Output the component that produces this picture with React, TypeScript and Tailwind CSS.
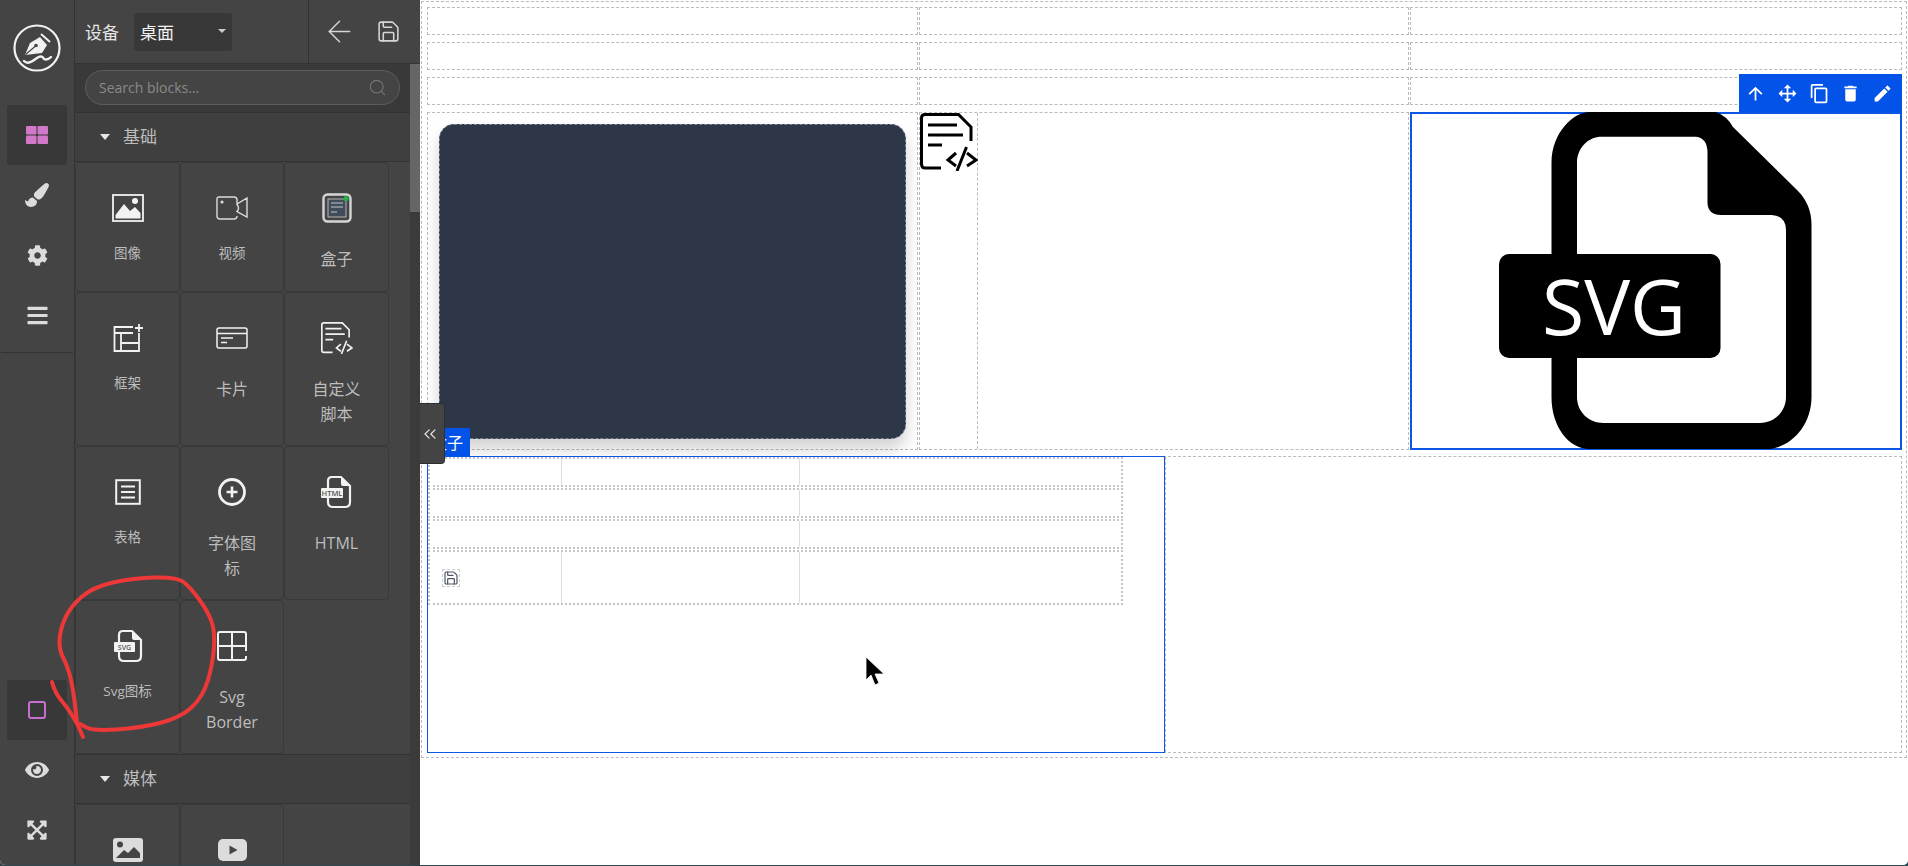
import React from "react";
import { ArrowLeft, ChevronsLeft, Save, Search } from "lucide-react";
import { FaBars, FaCog, FaExpandArrowsAlt, FaEye, FaPaintBrush } from "react-icons/fa";

// hand drawn ink on top of the screenshot
const smooth = (pts: number[][]): string => {
  let d = `M${pts[0][0]} ${pts[0][1]}`;
  for (let i = 1; i < pts.length - 1; i++) {
    const mx = (pts[i][0] + pts[i + 1][0]) / 2;
    const my = (pts[i][1] + pts[i + 1][1]) / 2;
    d += ` Q${pts[i][0]} ${pts[i][1]} ${mx} ${my}`;
  }
  const last = pts[pts.length - 1];
  return `${d} L${last[0]} ${last[1]}`;
};

const hook = [[52, 682], [55, 693], [67, 707], [77, 723], [83, 737]];
const loop = [
  [77, 723], [74, 693], [68, 667], [59, 650], [60, 630], [70, 607], [93, 587], [133, 578], [177, 577],
  [190, 587], [207, 610], [215, 630], [213, 663], [203, 697], [180, 718], [140, 728], [93, 731], [80, 724],
];

const toolbarIcons = [
  "M13,20H11V8L5.5,13.5L4.08,12.08L12,4.16L19.92,12.08L18.5,13.5L13,8V20Z",
  "M13,6V11H18V7.75L22.25,12L18,16.25V13H13V18H16.25L12,22.25L7.75,18H11V13H6V16.25L1.75,12L6,7.75V11H11V6H7.75L12,1.75L16.25,6H13Z",
  "M19,21H8V7H19M19,5H8A2,2 0 0,0 6,7V21A2,2 0 0,0 8,23H19A2,2 0 0,0 21,21V7A2,2 0 0,0 19,5M16,1H4A2,2 0 0,0 2,3V17H4V3H16V1Z",
  "M19,4H15.5L14.5,3H9.5L8.5,4H5V6H19M6,19A2,2 0 0,0 8,21H16A2,2 0 0,0 18,19V7H6V19Z",
  "M20.71,7.04C21.1,6.65 21.1,6 20.71,5.63L18.37,3.29C18,2.9 17.35,2.9 16.96,3.29L15.12,5.12L18.87,8.87M3,17.25V21H6.75L17.81,9.93L14.06,6.18L3,17.25Z",
];

const Logo = () => (
  <svg width="48" height="48" viewBox="0 0 48 48" fill="none" stroke="#f2f2f2">
    <circle cx="24" cy="24" r="22.5" strokeWidth="2.2" />
    <path d="M12 31 L17 19 L27 13 L34 21 L29 29 Z" fill="#f2f2f2" stroke="none" />
    <path d="M12.5 30.5 L22 22.5" stroke="#444" strokeWidth="1.2" />
    <circle cx="23" cy="21.5" r="1.8" fill="#444" stroke="none" />
    <path d="M28 10 L37 18" strokeWidth="2" />
    <path d="M11 37 C15 41 20 37 24 34 C28 31 30 33 31 35 C33 36 36 35 38 33" strokeWidth="2.4" strokeLinecap="round" />
  </svg>
);

const FileBadge = ({ label, small }: { label: string; small?: boolean }) => (
  <svg width="36" height="36" viewBox="0 0 36 36" fill="none">
    <path d="M9 7 Q9 3 13 3 H22 L31 12 V28 Q31 33 26 33 H14 Q9 33 9 28 Z" stroke="#f2f2f2" strokeWidth="2.2" />
    <path d="M22 3 V10 Q22 12 24 12 H31 Z" fill="#f2f2f2" />
    <rect x={small ? 4 : 2} y="14" width={small ? 21 : 22} height="10" rx="1" fill="#f2f2f2" />
    <text x={small ? 14.5 : 13} y="22" textAnchor="middle" fontSize={small ? 7 : 7.5} fontWeight="600" fill="#555">
      {label}
    </text>
  </svg>
);

const CodeFile = ({ size }: { size: number }) => (
  <svg width={size} height={size} viewBox="0 0 58 58" fill="none" stroke="currentColor" strokeWidth="3">
    <path d="M21 55 H5 Q1.5 55 1.5 51 V5 Q1.5 1.5 5 1.5 H38.5 L51 14 V28" />
    <path d="M8 12 H37 M8 22 H43 M8 32 H22" />
    <path d="M36 40 L28 47 L36 53 M47 40 L56 47 L47 53 M46.5 34 L37 58" />
  </svg>
);

const icons: Record<string, React.ReactNode> = {
  image: (
    <svg width="32" height="28" viewBox="0 0 32 28" fill="none">
      <rect x="1" y="1" width="30" height="26" stroke="#f2f2f2" strokeWidth="1.8" />
      <circle cx="23" cy="7" r="3" fill="#f2f2f2" />
      <path d="M3.5 24.5 V21 L12 10 L18 17 L23 13 L28.5 19 V24.5 Z" fill="#f2f2f2" />
    </svg>
  ),
  video: (
    <svg width="32" height="24" viewBox="0 0 32 24" fill="none" stroke="#dcdcdc" strokeWidth="1.4">
      <path d="M21 20 Q21 23 18 23 H4 Q1 23 1 20 V3 Q1 1 3 1 H18 Q21 1 21 4 V8 L31 2 V21 L21 15.5 Q24 12 21 8.5" />
      <circle cx="6" cy="6" r="0.9" fill="#dcdcdc" />
    </svg>
  ),
  box: (
    <svg width="30" height="30" viewBox="0 0 30 30" fill="none">
      <rect x="1.5" y="1.5" width="27" height="27" rx="4" stroke="#d6d6d6" strokeWidth="2.4" />
      <rect x="6" y="6" width="18" height="18" fill="#414b5a" stroke="#d0d0d0" strokeWidth="0.8" />
      <path d="M9 10 H21 M9 14 H21 M9 19 H15" stroke="#c5c8cc" strokeWidth="1" />
      <circle cx="24" cy="5.5" r="2.6" fill="#1fb44a" />
    </svg>
  ),
  frame: (
    <svg width="30" height="30" viewBox="0 0 30 30" fill="none" stroke="#f2f2f2" strokeWidth="1.8">
      <path d="M20 4 H1.5 V28 H26 V10" />
      <path d="M1.5 10 H20 M8 20 H26 M8 10 V28 M26 1 V9 M22 5 H30" />
    </svg>
  ),
  card: (
    <svg width="32" height="24" viewBox="0 0 32 24" fill="none" stroke="#f2f2f2" strokeWidth="1.5">
      <rect x="1" y="2" width="30" height="20" rx="2" />
      <path d="M1 7.5 H31" />
      <path d="M5 12 H17 M5 16.5 H11" />
    </svg>
  ),
  code: <CodeFile size={32} />,
  table: (
    <svg width="26" height="26" viewBox="0 0 26 26" fill="none" stroke="#f2f2f2">
      <rect x="1.2" y="1.2" width="23.6" height="23.6" strokeWidth="2" />
      <path d="M6 7.5 H20 M6 13 H20 M6 18.5 H20" strokeWidth="2" />
    </svg>
  ),
  fonticon: (
    <svg width="30" height="30" viewBox="0 0 30 30" fill="none" stroke="#f2f2f2">
      <circle cx="15" cy="15" r="12.5" strokeWidth="2.8" />
      <path d="M15 9.5 V20.5 M9.5 15 H20.5" strokeWidth="2.6" />
    </svg>
  ),
  html: <FileBadge label="HTML" />,
  svg: <FileBadge label="SVG" small />,
  border: (
    <svg width="32" height="32" viewBox="0 0 32 32" fill="none" stroke="#f2f2f2" strokeWidth="2">
      <path d="M30 21 V4 Q30 2 28 2 H4 Q2 2 2 4 V28 Q2 30 4 30 H28 Q30 30 30 28 V26" />
      <path d="M16 2 V30 M2 16 H30" />
    </svg>
  ),
  mediaImage: (
    <svg width="30" height="24" viewBox="0 0 30 24">
      <rect width="30" height="24" rx="3" fill="#dcdcdc" />
      <circle cx="7" cy="6.5" r="3" fill="#444" />
      <path d="M3 20 L11 12 L15 15 L21 9 L27 15 V20 Z" fill="#444" />
    </svg>
  ),
  mediaVideo: (
    <svg width="29" height="22" viewBox="0 0 29 22">
      <rect width="29" height="22" rx="5" fill="#dcdcdc" />
      <path d="M11.5 6.5 L19.5 11 L11.5 15.5 Z" fill="#444" />
    </svg>
  ),
};

const tiles = [
  { icon: "image", lines: ["图像"], small: true, h: "h-[130px]" },
  { icon: "video", lines: ["视频"], small: true, h: "h-[130px]" },
  { icon: "box", lines: ["盒子"], h: "h-[130px]" },
  { icon: "frame", lines: ["框架"], small: true, h: "h-[154px]" },
  { icon: "card", lines: ["卡片"], h: "h-[154px]" },
  { icon: "code", lines: ["自定义", "脚本"], h: "h-[154px]" },
  { icon: "table", lines: ["表格"], small: true, h: "h-[154px]" },
  { icon: "fonticon", lines: ["字体图", "标"], h: "h-[154px]" },
  { icon: "html", lines: ["HTML"], h: "h-[154px]" },
  { icon: "svg", lines: ["Svg图标"], small: true, h: "h-[154px]" },
  { icon: "border", lines: ["Svg", "Border"], h: "h-[154px]" },
];

const Tile = ({ icon, lines, small, h }: { icon: string; lines: string[]; small?: boolean; h: string }) => (
  <div className={`${h} flex flex-col items-center rounded-[4px] border border-[#393939] pt-[27px] text-[#bdbdbd]`}>
    <div className="flex h-9 items-center justify-center text-[#f2f2f2]">{icons[icon]}</div>
    {small ? (
      <div className="mt-[17px] text-[13.5px] leading-5">{lines[0]}</div>
    ) : (
      <div className="mt-[21px] text-center text-[16px] leading-[25px]">
        {lines.map((l) => (
          <div key={l}>{l}</div>
        ))}
      </div>
    )}
  </div>
);

const SectionHeader = ({ title }: { title: string }) => (
  <div className="flex h-[50px] items-center gap-[13px] border-y border-[#333] bg-[#3f3f3f] pl-[25px] text-[17px] text-[#bdbdbd]">
    <span className="h-0 w-0 border-x-[5.5px] border-t-[6px] border-x-transparent border-t-[#e6e6e6]" />
    {title}
  </div>
);

const RailButton = ({ active, children }: { active?: boolean; children: React.ReactNode }) => (
  <div className={`flex h-[60px] w-[60px] items-center justify-center rounded-[3px] text-[#dcdcdc] ${active ? "bg-[#383838]" : ""}`}>
    {children}
  </div>
);

const Cell = ({ className }: { className: string }) => <div className={`h-full border border-dashed border-[#bbb] ${className}`} />;

const TopRow = () => (
  <div className="flex h-7 gap-[1px]">
    <Cell className="w-[491px]" />
    <Cell className="w-[490px]" />
    <Cell className="flex-1" />
  </div>
);

const TableRow = ({ tall, merged, children }: { tall?: boolean; merged?: boolean; children?: React.ReactNode }) => (
  <div className={`flex border-2 border-dotted border-[#c4c4c4] ${tall ? "h-[55px]" : "h-[30px]"}`}>
    {!merged && <div className="flex w-[132px] items-center border-r border-[#ddd] pl-3">{children}</div>}
    <div className={`${merged ? "w-[370px]" : "w-[238px]"} border-r border-[#ddd]`} />
    <div className="flex-1" />
  </div>
);

export default function App() {
  return (
    <div className="relative h-[866px] w-[1908px] overflow-hidden bg-[#2c4a52] [font-family:'Open_Sans','Noto_Sans_CJK_SC',sans-serif]">
      <div className="flex h-[865px] overflow-hidden rounded-b-[5px] bg-white">
        {/* left rail */}
        <div className="flex w-[75px] shrink-0 flex-col items-center border-r border-[#333] bg-[#444] pb-[5px]">
          <div className="flex h-[105px] w-full items-start justify-center pt-6">
            <Logo />
          </div>
          <RailButton active>
            <svg width="22" height="18" viewBox="0 0 22 18" fill="#d278c9">
              <rect width="10.5" height="8.5" rx="1" />
              <rect x="11.5" width="10.5" height="8.5" rx="1" />
              <rect y="9.5" width="10.5" height="8.5" rx="1" />
              <rect x="11.5" y="9.5" width="10.5" height="8.5" rx="1" />
            </svg>
          </RailButton>
          <RailButton>
            <FaPaintBrush size={24} />
          </RailButton>
          <RailButton>
            <FaCog size={21} />
          </RailButton>
          <RailButton>
            <FaBars size={23} />
          </RailButton>
          <div className="mt-[7px] h-px w-[72px] bg-[#333]" />
          <div className="mt-auto">
            <RailButton active>
              <div className="h-[18px] w-[18px] rounded-[3px] border-2 border-[#c66fd0]" />
            </RailButton>
            <RailButton>
              <FaEye size={24} />
            </RailButton>
            <RailButton>
              <FaExpandArrowsAlt size={22} />
            </RailButton>
          </div>
        </div>

        {/* blocks panel */}
        <div className="flex w-[345px] shrink-0 flex-col bg-[#444]">
          <div className="flex h-[64px] shrink-0 items-center border-b border-[#333]">
            <div className="flex h-full w-[234px] items-center gap-[15px] border-r border-[#333] pl-[10px] text-[17px] text-[#e6e6e6]">
              <span className="mt-[2px]">设备</span>
              <div className="relative flex h-[38px] w-[98px] items-center rounded-[3px] bg-[#383838] pl-[6px] text-[17px] text-[#f2f2f2]">
                <span className="mt-[2px]">桌面</span>
                <span className="absolute right-[6px] top-[16px] h-0 w-0 border-x-[4px] border-t-[4px] border-x-transparent border-t-[#ccc]" />
              </div>
            </div>
            <div className="flex flex-1 items-center gap-[19px] pl-[13px] text-[#d6d6d6]">
              <ArrowLeft size={35} strokeWidth={1} />
              <Save size={25} strokeWidth={1.5} />
            </div>
          </div>
          <div className="flex min-h-0 flex-1">
            <div className="min-w-0 flex-1 overflow-hidden">
              <div className="flex h-[48px] items-start bg-[#393939] px-[10px] pt-[6px]">
                <div className="flex h-[35px] w-full items-center rounded-full border border-[#5c5c5c] bg-[#444] pl-[13px] pr-[12px]">
                  <input
                    placeholder="Search blocks..."
                    className="min-w-0 flex-1 bg-transparent text-[14px] outline-none placeholder:text-[#8a8a8a]"
                  />
                  <Search size={19} strokeWidth={1.4} className="text-[#777]" />
                </div>
              </div>
              <SectionHeader title="基础" />
              <div className="grid grid-cols-[105px_104px_105px]">
                {tiles.map((t) => (
                  <Tile key={t.icon} {...t} />
                ))}
              </div>
              <SectionHeader title="媒体" />
              <div className="grid grid-cols-[105px_104px]">
                <div className="flex h-[100px] justify-center rounded-[4px] border border-[#393939] pt-[33px]">{icons.mediaImage}</div>
                <div className="flex h-[100px] justify-center rounded-[4px] border border-[#393939] pt-[34px]">{icons.mediaVideo}</div>
              </div>
            </div>
            <div className="w-[10px] shrink-0 bg-[#3b3b3b]">
              <div className="h-[148px] bg-[#666]" />
            </div>
          </div>
        </div>

        {/* canvas */}
        <div className="relative flex-1 bg-white">
          <div className="ml-px mt-px flex h-[757px] w-[1486px] flex-col gap-[7px] border border-dashed border-[#bbb] pl-[5px] pr-[4px] pt-[5px]">
            <TopRow />
            <TopRow />
            <TopRow />
            <div className="flex h-[338px] gap-[1px]">
              <div className="h-full w-[491px] border border-dashed border-[#bbb] pb-[10px] pl-[11px] pr-[11px] pt-[11px]">
                <div className="h-full rounded-[15px] border border-dashed border-[#7c8594] bg-[#2d3748] shadow-[0_10px_16px_rgba(0,0,0,0.18)]" />
              </div>
              <div className="h-full w-[490px] border border-dashed border-[#bbb]">
                <div className="h-full w-[58px] border-r border-dashed border-[#bbb] text-black">
                  <CodeFile size={58} />
                </div>
              </div>
              <div className="relative flex h-full flex-1 justify-center border-2 border-[#0b57e3]">
                <div className="absolute -top-[40px] right-[-2px] flex h-[38px] w-[163px] items-center justify-between bg-[#0353e9] pl-[6px] pr-[9px] text-white">
                  {toolbarIcons.map((d) => (
                    <svg key={d} width="21" height="21" viewBox="0 0 24 24" fill="currentColor">
                      <path d={d} />
                    </svg>
                  ))}
                </div>
                <svg width="313" height="337" viewBox="0 0 313 337" className="-mt-[2px] shrink-0 -translate-x-px">
                  <path
                    fillRule="evenodd"
                    d="M52.5 51 C52.5 20 75 0 90.5 0 H217 Q228 4 234 15 L298 78 Q312.5 92 312.5 113 V285 C312.5 315 290 337 267.5 337 H90.5 C70 337 52.5 315 52.5 285 Z M78 51 C78 35 90 24.7 102.5 24.7 H197 Q208.5 26 208.5 41 V91 Q209 103 222 103 H272.5 Q287 104 287 118 V285 C287 300 275 311 261 311 H104.5 C90 311 78 300 78 285 Z"
                  />
                  <rect y="142" width="221.5" height="104" rx="10" />
                  <text x="115" y="223" textAnchor="middle" fontSize="77" fill="#fff">
                    SVG
                  </text>
                </svg>
              </div>
            </div>
            <div className="-mt-px flex h-[297px] border border-dashed border-[#bbb]">
              <div className="relative -ml-px -mt-px h-[297px] w-[738px] border border-[#0b57e3]">
                <div className="absolute bottom-full left-[-1px] flex h-[29px] w-[43px] items-center justify-end bg-[#0353e9] pr-[7px] text-[16px] text-white">
                  盒子
                </div>
                <div className="flex w-[695px] flex-col gap-[1px]">
                  <TableRow />
                  <TableRow merged />
                  <TableRow merged />
                  <TableRow tall>
                    <div className="border border-dashed border-[#ccc] text-[#4b5563]">
                      <Save size={16} strokeWidth={1.8} />
                    </div>
                  </TableRow>
                </div>
              </div>
              <div className="h-full flex-1 border-l border-dashed border-[#bbb]" />
            </div>
          </div>

          {/* panel collapse handle */}
          <div className="absolute left-0 top-[403px] flex h-[61px] w-[25px] items-center justify-center rounded-r-[4px] border border-l-0 border-[#2f2f2f] bg-[#444] pr-[4px] text-[#e6e6e6]">
            <ChevronsLeft size={22} strokeWidth={1.4} />
          </div>

          {/* mouse pointer */}
          <svg width="20" height="30" viewBox="0 0 20 30" className="absolute left-[445px] top-[656px]">
            <path d="M1 1 L1 24 L6 19 L10 29 L14 27 L10 18 L19 18 Z" stroke="#fff" strokeWidth="0.8" />
          </svg>
        </div>
      </div>

      {/* red marker */}
      <svg width="1908" height="866" className="pointer-events-none absolute left-0 top-0" fill="none" stroke="#ee3838" strokeWidth="4" strokeLinecap="round" strokeLinejoin="round">
        <path d={smooth(hook)} />
        <path d={smooth(loop)} />
      </svg>
    </div>
  );
}
